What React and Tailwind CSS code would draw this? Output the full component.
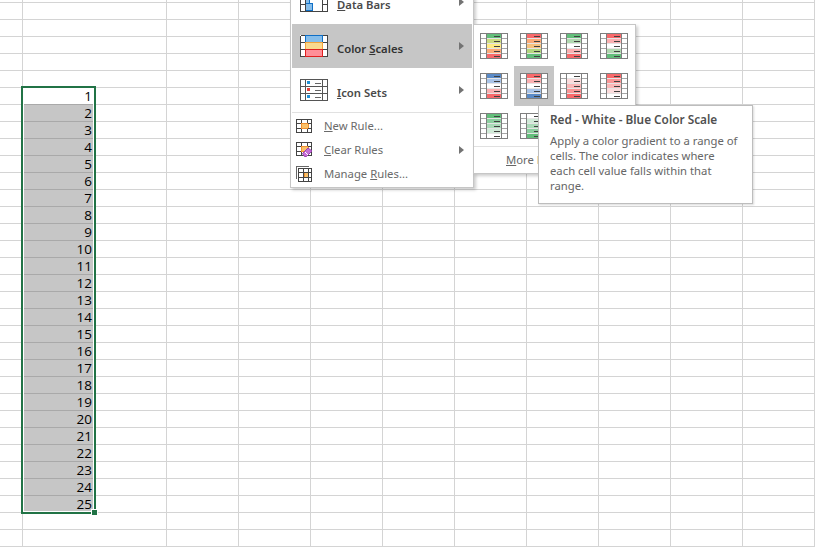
const UI = { fontFamily: '"Noto Sans", sans-serif' };

const G = '#63be7b', LG = '#cbdc81', Y = '#ffeb84', O = '#fbaa77', R = '#f8696b';
const W = '#ffffff', B = '#5a8ac6', LB = '#a9c4e8';

const SCALES = [
  [G, LG, Y, O, R],
  [R, O, '#f6c27f', '#b5d77f', G],
  [G, '#b1d8b0', W, '#fbb0b1', R],
  [R, '#fbb0b1', W, '#b1d8b0', G],
  [B, LB, W, '#fbb0b1', R],
  [R, '#fbb0b1', W, LB, B],
  [W, '#fcdcdc', '#fbb8b8', '#fa9696', R],
  [R, '#fa9696', '#fbb8b8', '#fcdcdc', W],
  [G, '#8ccf9f', '#abdab8', '#d0ead7', W],
  [W, '#d0ead7', '#abdab8', '#8ccf9f', G],
  [G, '#a0cd80', LG, '#eee284', Y],
  [Y, '#eee284', LG, '#a0cd80', G],
];

function ScaleIcon({ colors }) {
  return (
    <svg width="28" height="26" viewBox="0 0 28 26" shapeRendering="crispEdges">
      <rect x="0" y="0" width="28" height="26" fill="#ffffff" />
      {colors.map((c, i) => (
        <rect key={i} x="7" y={i * 5 + 1} width="15" height="4" fill={c} />
      ))}
      <rect x="0.5" y="0.5" width="27" height="25" fill="none" stroke="#7f7f7f" />
      {[5.5, 10.5, 15.5, 20.5].map((y) => (
        <path key={y} d={`M1 ${y}H6M22 ${y}H27`} stroke="#a6a6a6" />
      ))}
      {[5.5, 10.5, 15.5, 20.5].map((y) => (
        <path key={'c' + y} d={`M7 ${y}H22`} stroke="#e4e4e4" />
      ))}
      <path d="M6.5 1V25M21.5 1V25" stroke="#7f7f7f" />
      {[3, 8, 13, 18, 23].map((y) => (
        <path key={y} d={`M14 ${y + 0.5}H20`} stroke="#404040" />
      ))}
    </svg>
  );
}

function DataBarsIcon() {
  return (
    <svg width="28" height="25" viewBox="0 0 28 25" shapeRendering="crispEdges">
      <rect x="5.5" y="0" width="4" height="11" fill="#86bdea" stroke="#0f6fc6" />
      <rect x="5.5" y="4.5" width="7" height="7" fill="#86bdea" stroke="#0f6fc6" />
      <path d="M0.5 0V12.5H27.5V0M5.5 0V12M22.5 0V12M1 5.5H5M23 5.5H27" fill="none" stroke="#444" />
    </svg>
  );
}

function ColorScalesIcon() {
  return (
    <svg width="28" height="22" viewBox="0 0 28 22" shapeRendering="crispEdges">
      <rect x="0" y="0" width="28" height="22" fill="#ffffff" />
      <rect x="5.5" y="0.5" width="17" height="7" fill="#86bdea" stroke="#0f6fc6" />
      <rect x="5.5" y="7.5" width="17" height="7" fill="#fad98e" stroke="#f2a33a" />
      <rect x="5.5" y="14.5" width="17" height="7" fill="#ff8f98" stroke="#e02020" />
      <path d="M1 7.5H5M23 7.5H27M1 14.5H5M23 14.5H27" fill="none" stroke="#444" />
      <path d="M0.5 0.5H5M23 0.5H27.5V21.5H23M5 21.5H0.5V0.5" fill="none" stroke="#444" />
    </svg>
  );
}

function IconSetsIcon() {
  return (
    <svg width="28" height="22" viewBox="0 0 28 22" shapeRendering="crispEdges">
      <path d="M0.5 0.5H27.5V21.5H0.5ZM5.5 1V21M22.5 1V21M1 7.5H27M1 14.5H27" fill="none" stroke="#555" />
      <rect x="7" y="2" width="3" height="3" fill="#1e8fd5" />
      <rect x="7" y="9" width="3" height="3" fill="#e8403a" />
      <rect x="7" y="16" width="3" height="3" fill="#1e8fd5" />
      <path d="M15 4.5H21M15 11.5H21M15 18.5H21" stroke="#666" />
    </svg>
  );
}

function SmallGrid() {
  return (
    <>
      <rect x="5.5" y="4.5" width="7" height="5" fill="#fbc169" stroke="#ef8f2f" />
      <path d="M0.5 0.5H15.5V13.5H0.5ZM5.5 1V4M11.5 1V4M5.5 10V13M11.5 10V13M1 4.5H5M12 4.5H15M1 9.5H5M12 9.5H15" fill="none" stroke="#444" />
    </>
  );
}

function NewRuleIcon() {
  return (
    <svg width="16" height="14" viewBox="0 0 16 14" shapeRendering="crispEdges">
      <SmallGrid />
    </svg>
  );
}

function ClearRulesIcon() {
  return (
    <svg width="17" height="16" viewBox="0 0 17 16">
      <g shapeRendering="crispEdges">
        <SmallGrid />
      </g>
      <path d="M6.5 11.5L12 6L16 9L10.5 14.5H8.5Z" fill="#c66fd6" stroke="#9a3fb0" strokeWidth="1" />
      <path d="M9 10L12 13" stroke="#fff" strokeWidth="1" />
    </svg>
  );
}

function ManageRulesIcon() {
  return (
    <svg width="16" height="16" viewBox="0 0 16 16" shapeRendering="crispEdges">
      <path d="M0.5 13V0.5H13" fill="none" stroke="#666" />
      <rect x="8.5" y="6.5" width="4" height="5" fill="#fbc169" stroke="#ef8f2f" />
      <path d="M2.5 2.5H15.5V15.5H2.5ZM7.5 3V15M12.5 3V15M3 6.5H15M3 11.5H15" fill="none" stroke="#444" />
    </svg>
  );
}

function Arrow() {
  return (
    <svg className="ml-auto mr-[8px]" width="5" height="8" viewBox="0 0 5 8">
      <path d="M0 0L5 4L0 8Z" fill="#737373" />
    </svg>
  );
}

function BigRow({ icon, children, active, top }) {
  return (
    <div className={`flex h-[44px] items-center ${active ? 'bg-[#c6c6c6]' : ''}`}>
      <div className={`ml-[8px] flex w-[37px] shrink-0 ${top ? 'self-end' : ''}`}>{icon}</div>
      <span className={`pt-[6px] text-[11.3px] font-semibold ${active ? 'text-[#333333]' : 'text-[#4a4a4a]'}`}>{children}</span>
      <Arrow />
    </div>
  );
}

function SmallRow({ icon, children, arrow }) {
  return (
    <div className="flex h-[24px] items-center">
      <div className="ml-[4px] flex w-[28px] shrink-0">{icon}</div>
      <span className="pt-px text-[11.3px] text-[#6a6a6a]">{children}</span>
      {arrow && <Arrow />}
    </div>
  );
}

function Row({ r }) {
  const n = r >= 6 && r <= 30 ? r - 5 : null;
  return (
    <div className={`flex shrink-0 ${r === 0 ? 'h-[3px]' : 'h-[17px]'}`}>
      <div className="h-full w-[23px] shrink-0 border-b border-r border-[#d4d4d4]" />
      <div
        className={`flex h-full w-[72px] shrink-0 items-center justify-end border-b pr-[3px] ${
          n > 1 ? 'border-[#a9a9a9] bg-[#c6c6c6]' : n === 1 ? 'border-[#a9a9a9]' : 'border-[#d4d4d4]'
        }`}
      >
        {n ? <span className="text-[13.5px] leading-[16px] text-black">{n}</span> : null}
      </div>
      {Array.from({ length: 10 }).map((_, i) => (
        <div key={i} className="h-full w-[72px] shrink-0 border-b border-r border-[#d4d4d4]" />
      ))}
    </div>
  );
}

export default function App() {
  return (
    <div className="relative h-[547px] w-[817px] overflow-hidden bg-white" style={UI}>
      <div className="flex flex-col" style={{ fontFamily: '"Open Sans", sans-serif' }}>
        {Array.from({ length: 33 }).map((_, r) => (
          <Row key={r} r={r} />
        ))}
      </div>

      {/* selection */}
      <div className="absolute left-[21px] top-[86px] h-[428px] w-[75px] border-2 border-[#217346] shadow-[inset_0_0_0_1px_#ffffff]" />
      <div className="absolute left-[92px] top-[510px] h-[5px] w-[5px] bg-[#217346] outline outline-1 outline-white" />

      {/* main menu */}
      <div className="absolute left-[290px] top-[-21px] h-[209px] w-[184px] border border-[#c6c6c6] bg-white px-px shadow-[2px_2px_3px_rgba(0,0,0,0.2)]">
        <BigRow icon={<DataBarsIcon />} top>
          <u>D</u>ata Bars
        </BigRow>
        <BigRow icon={<ColorScalesIcon />} active>
          Color <u>S</u>cales
        </BigRow>
        <BigRow icon={<IconSetsIcon />}>
          <u>I</u>con Sets
        </BigRow>
        <div className="mb-px h-px bg-[#e1e1e1]" />
        <SmallRow icon={<NewRuleIcon />}>
          <u>N</u>ew Rule...
        </SmallRow>
        <SmallRow icon={<ClearRulesIcon />} arrow>
          <u>C</u>lear Rules
        </SmallRow>
        <SmallRow icon={<ManageRulesIcon />}>
          Manage <u>R</u>ules...
        </SmallRow>
      </div>

      {/* color scales submenu */}
      <div className="absolute left-[473px] top-[24px] h-[150px] w-[163px] border border-[#c6c6c6] bg-white pt-px shadow-[2px_2px_3px_rgba(0,0,0,0.2)]">
        <div className="grid grid-cols-[repeat(4,40px)] grid-rows-[repeat(3,40px)]">
          {SCALES.map((colors, i) => (
            <div key={i} className={`flex items-center justify-center ${i === 5 ? 'bg-[#c6c6c6]' : ''}`}>
              <ScaleIcon colors={colors} />
            </div>
          ))}
        </div>
        <div className="h-px bg-[#e1e1e1]" />
        <div className="pl-[32px] pt-[5px] text-[11.3px] leading-[16px] text-[#666666]">
          <u>M</u>ore Rules...
        </div>
      </div>

      {/* tooltip */}
      <div className="absolute left-[538px] top-[105px] h-[99px] w-[215px] border border-[#bdbdbd] bg-white pl-[11px] pt-[6px] shadow-[1px_1px_2px_rgba(0,0,0,0.15)]">
        <div className="text-[11.8px] font-semibold leading-[15px] text-[#505050]">Red - White - Blue Color Scale</div>
        <div className="mt-[6px] whitespace-nowrap text-[11.3px] leading-[15px] text-[#666666]">
          <div>Apply a color gradient to a range of</div>
          <div>cells. The color indicates where</div>
          <div>each cell value falls within that</div>
          <div>range.</div>
        </div>
      </div>
    </div>
  );
}
